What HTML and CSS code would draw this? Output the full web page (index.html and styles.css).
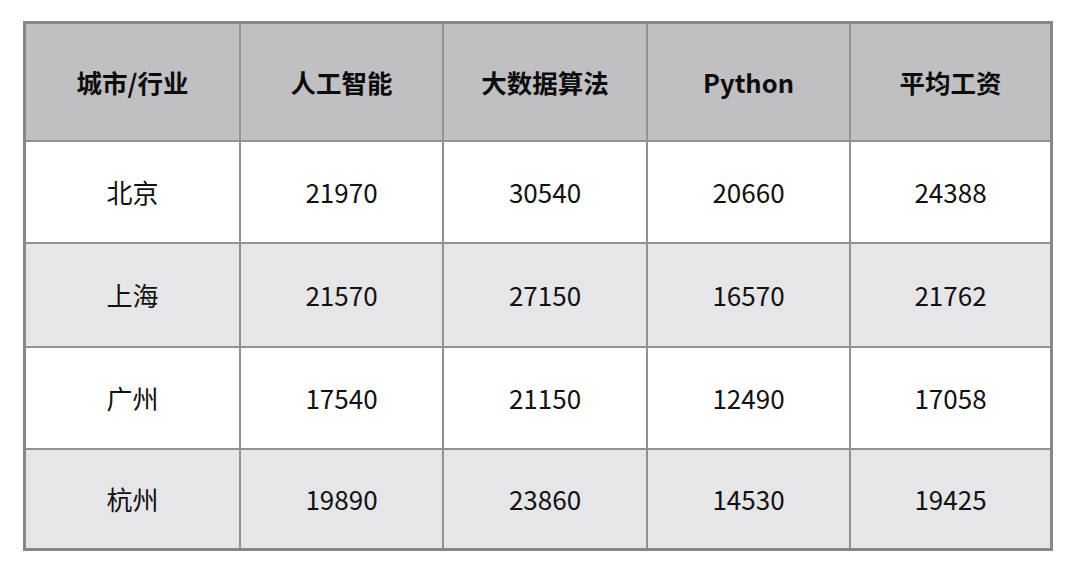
FILE: index.html
```html
<!DOCTYPE html>
<html lang="zh-CN">
<head>
<meta charset="utf-8">
<title>城市薪资</title>
<link rel="stylesheet" href="styles.css">
</head>
<body>
<div class="page">
  <div class="table" role="table">
    <div class="cell head">城市/行业</div>
    <div class="cell head">人工智能</div>
    <div class="cell head">大数据算法</div>
    <div class="cell head">Python</div>
    <div class="cell head">平均工资</div>

    <div class="cell">北京</div>
    <div class="cell">21970</div>
    <div class="cell">30540</div>
    <div class="cell">20660</div>
    <div class="cell">24388</div>

    <div class="cell alt">上海</div>
    <div class="cell alt">21570</div>
    <div class="cell alt">27150</div>
    <div class="cell alt">16570</div>
    <div class="cell alt">21762</div>

    <div class="cell">广州</div>
    <div class="cell">17540</div>
    <div class="cell">21150</div>
    <div class="cell">12490</div>
    <div class="cell">17058</div>

    <div class="cell alt">杭州</div>
    <div class="cell alt">19890</div>
    <div class="cell alt">23860</div>
    <div class="cell alt">14530</div>
    <div class="cell alt">19425</div>
  </div>
</div>
</body>
</html>
```

FILE: styles.css
```css
html, body {
  margin: 0;
  padding: 0;
  background: #ffffff;
}

.page {
  padding: 21px 0 0 23px;
}

.table {
  display: grid;
  grid-template-columns: 213px 201px 202px 201px 199px;
  grid-template-rows: 116px 100px 102px 100px 98px;
  gap: 2px;
  width: 1024px;
  height: 524px;
  border: 3px solid #878787;
  background: #929292;
  font-family: "Noto Sans CJK SC", "Noto Sans", sans-serif;
  font-size: 26px;
  color: #111111;
}

.cell {
  display: flex;
  align-items: center;
  justify-content: center;
  background: #ffffff;
  padding-bottom: 1px;
}

.head {
  background: #c0bfc1;
  font-weight: 700;
  font-size: 25.5px;
  color: #0c0c0c;
}

.alt {
  background: #e6e5e7;
}
```
